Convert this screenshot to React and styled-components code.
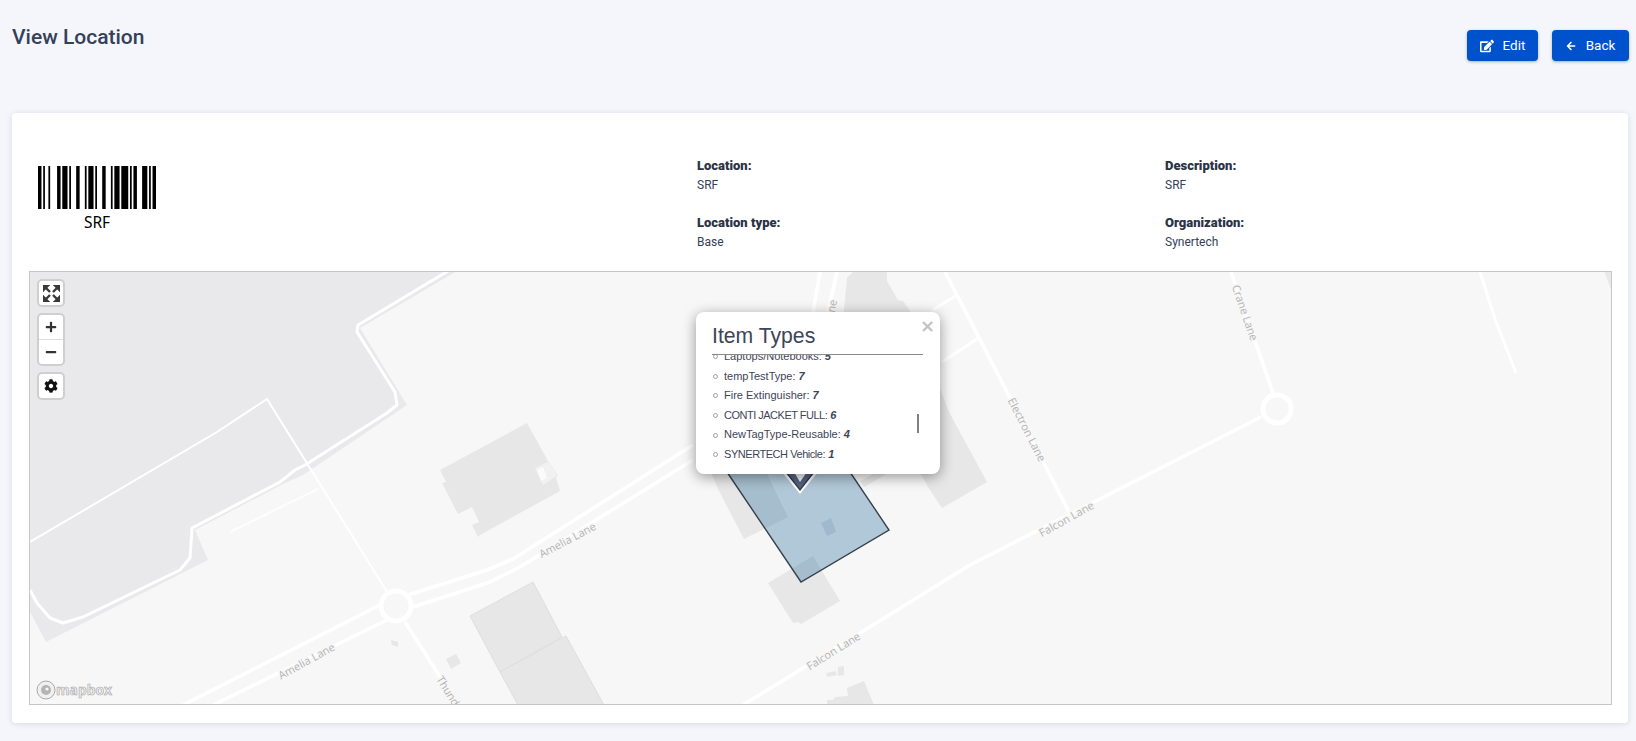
import React from "react";
import styled, { createGlobalStyle } from "styled-components";
import { FaEdit, FaArrowLeft, FaPlus, FaMinus, FaCog } from "react-icons/fa";

const Global = createGlobalStyle`
  html, body { margin: 0; padding: 0; height: 100%; background: #f4f6fb; overflow: hidden; }
  body { font-family: Roboto, "Liberation Sans", sans-serif; }
`;

const Page = styled.div`
  width: 1636px;
  height: 741px;
  background: #f4f6fb;
`;
const Header = styled.header`
  height: 113px;
  box-sizing: border-box;
  padding: 24px 7px 0 12px;
  display: flex;
  justify-content: space-between;
  align-items: flex-start;
`;
const Title = styled.h1`
  margin: 1px 0 0;
  font: 500 21px/24px Roboto, sans-serif;
  color: #344159;
`;
const Actions = styled.div`
  display: flex;
  gap: 14px;
  margin-top: 6px;
`;
const Button = styled.button`
  height: 31px;
  width: ${(p) => p.$w}px;
  border: 0;
  border-radius: 4px;
  background: #0052cc;
  color: #fff;
  font: 400 13.5px/31px Roboto, sans-serif;
  display: flex;
  align-items: center;
  justify-content: center;
  gap: ${(p) => p.$gap}px;
  padding: 0;
  box-shadow: 0 1px 3px rgba(0, 0, 0, 0.3);
`;
const Card = styled.section`
  width: 1616px;
  height: 610px;
  box-sizing: border-box;
  margin-left: 12px;
  padding: 44px 16px 0 17px;
  background: #fff;
  border-radius: 4px;
  box-shadow: 0 1px 6px rgba(40, 50, 80, 0.14);
`;
const Info = styled.div`
  display: grid;
  grid-template-columns: 668px 468px 1fr;
  height: 114px;
`;
const BarcodeBox = styled.div`
  margin: 9px 0 0 9px;
  width: 118px;
  display: flex;
  flex-direction: column;
  align-items: center;
`;
const BarcodeText = styled.div`
  font: 15.5px/18px "Noto Sans", sans-serif;
  color: #000;
  margin-top: 4px;
`;
const Column = styled.div`
  display: flex;
  flex-direction: column;
  gap: 19px;
`;
const Field = styled.div`
  display: flex;
  flex-direction: column;
`;
const Label = styled.div`
  font: 900 13px/19px Roboto, sans-serif;
  color: #2b3346;
  margin: -1px 0 1px;
`;
const Value = styled.div`
  font: 400 12px/19px Roboto, sans-serif;
  color: #344159;
`;
const MapBox = styled.div`
  position: relative;
  height: 434px;
  box-sizing: border-box;
  border: 1px solid #c6c6c6;
  overflow: hidden;
  background: #f7f7f7;
`;
const MapSvg = styled.svg`
  display: block;
  width: 100%;
  height: 100%;
`;
const Land = styled.polygon`
  fill: ${(p) => p.$fill || "#e7e7e7"};
  stroke: ${(p) => p.$stroke || "none"};
`;
const Road = styled.polyline`
  fill: none;
  stroke: #fff;
  stroke-width: ${(p) => p.$w || 3.6};
  stroke-linejoin: round;
  stroke-linecap: butt;
  opacity: ${(p) => p.$o || 1};
`;
const Roundabout = styled.circle`
  fill: #f7f7f7;
  stroke: #fff;
  stroke-width: 5;
`;
const Street = styled.text`
  font: 400 11px "Open Sans", "DejaVu Sans", sans-serif;
  fill: #b3b3b3;
  text-anchor: middle;
  dominant-baseline: middle;
  stroke: #f7f7f7;
  stroke-width: 3px;
  paint-order: stroke;
`;
const Parcel = styled.polygon`
  fill: #105d92;
  fill-opacity: 0.3;
  stroke: #36404c;
  stroke-width: 1.4;
`;
const LogoText = styled.text`
  font: 700 15px "Open Sans", "Liberation Sans", sans-serif;
  fill: #f0f0f0;
  stroke: #a8a8a8;
  stroke-width: 0.7px;
`;
const Controls = styled.div`
  position: absolute;
  left: 7px;
  top: 7px;
  display: flex;
  flex-direction: column;
  gap: 6px;
`;
const CtrlGroup = styled.div`
  width: 24px;
  background: #fff;
  border: 2px solid #cfcfcf;
  border-radius: 5px;
  display: flex;
  flex-direction: column;
`;
const CtrlBtn = styled.div`
  height: 24px;
  display: flex;
  align-items: center;
  justify-content: center;
  color: #333;
  & + & {
    border-top: 1px solid #ddd;
  }
`;
const Popup = styled.div`
  position: absolute;
  left: 666px;
  top: 40px;
  width: 244px;
  height: 162px;
  box-sizing: border-box;
  padding: 11px 17px 0 16px;
  background: #fff;
  border-radius: 8px;
  box-shadow: 0 3px 14px rgba(0, 0, 0, 0.4);
`;
const PopupClose = styled.span`
  position: absolute;
  right: 5px;
  top: 4px;
  font: 700 18px/20px "DejaVu Sans", sans-serif;
  color: #c3c3c3;
`;
const PopupTitle = styled.h3`
  margin: 0;
  padding-bottom: 5px;
  border-bottom: 1px solid #8a8a8a;
  font: 400 21.2px/26px "Liberation Sans", Arial, sans-serif;
  color: #3d4558;
  width: 211px;
`;
const ListClip = styled.div`
  height: 118px;
  overflow: hidden;
`;
const List = styled.ul`
  list-style: none;
  margin: -8px 0 0;
  padding: 0;
`;
const Item = styled.li`
  height: 19.6px;
  display: flex;
  align-items: center;
  gap: 6px;
  font: 400 11px/19.6px "Liberation Sans", Arial, sans-serif;
  letter-spacing: ${(p) => p.$track || 0}px;
  color: #3d4558;
  &::before {
    content: "";
    width: 3px;
    height: 3px;
    border: 1px solid #a0a0a0;
    border-radius: 50%;
    margin-left: 1px;
  }
`;
const Count = styled.b`
  font-style: italic;
  margin-left: 3px;
`;
const Thumb = styled.div`
  position: absolute;
  left: 221px;
  top: 102px;
  width: 2px;
  height: 19px;
  background: #808080;
`;

const patterns = ["11010010000", "11011101000", "11000101110", "10001100010", "11101111010", "1100011101011"];
const bits = patterns.join("");

function Barcode() {
  const rects = [];
  let i = 0;
  while (i < bits.length) {
    if (bits[i] === "1") {
      let j = i;
      while (bits[j] === "1") j++;
      rects.push(<rect key={i} x={i} y="0" width={j - i} height="43" fill="#000" />);
      i = j;
    } else i++;
  }
  return (
    <svg width="118" height="43" viewBox={`0 0 ${bits.length} 43`} preserveAspectRatio="none">
      {rects}
    </svg>
  );
}

function ExpandIcon() {
  return (
    <svg width="17" height="17" viewBox="0 0 17 17" fill="#3a3a3a" stroke="#3a3a3a">
      <polygon points="0,0 7,0 0,7" strokeWidth="0.4" />
      <polygon points="17,0 10,0 17,7" strokeWidth="0.4" />
      <polygon points="0,17 7,17 0,10" strokeWidth="0.4" />
      <polygon points="17,17 10,17 17,10" strokeWidth="0.4" />
      <path d="M3 3 L7 7 M14 3 L10 7 M3 14 L7 10 M14 14 L10 10" strokeWidth="2.4" fill="none" />
    </svg>
  );
}

function MapDrawing() {
  return (
    <MapSvg viewBox="30 272 1581 432" preserveAspectRatio="none">
      <Land $fill="#e9e9eb" points="29,271 457,271 360,328 407,405 303,475 283,484 195,530 208,560 46,642 29,610" />
      <Land $fill="#e9e9eb" points="1604,271 1612,271 1612,292" />

      <Land points="527,423 548,461 558,475 556,478 560,491 480,535 478,537 472,525 479,522 472,507 458,514 442,483 446,482 440,470" />
      <Land $fill="#f1f1f1" points="535,468 548,462 558,475 543,485" />
      <Land $fill="#fbfbfb" points="537,470 543,467 547,478 541,481" />
      <Land points="470,616 533,582 562,637 500,672" $stroke="#dedede" />
      <Land points="566,636 604,705 518,705 500,672" $stroke="#dedede" />
      <Land points="768,583 813,556 840,601 801,624 798,622 793,623" />
      <Land points="718,489 744,539 788,517 760,460 710,470" />
      <Land points="847,278 853,272 887,272 887,281 898,300 903,301 910,311 949,412 987,482 942,508 928,487 842,330" />
      <Land points="860,481 881,470 885,475 864,487" />
      <Land points="827,705 827,700 833,700 835,697 848,696 847,688 864,681 874,705" />
      <Land points="826,673 836,671 837,675 827,677" />
      <Land points="838,667 844,666 844,675 838,676" />
      <Land points="446,659 456,654 461,663 451,669" />
      <Land points="391,640 398,642 398,647 392,645" />

      <Road $w={3} points="448,271 358,325 357,332 395,392 397,405 387,413 305,465 295,470 280,482 192,528 190,558 180,570 83,617 63,623 50,618 37,603 30,590" />
      <Road $w={2} points="30,542 217,432 267,399 389,595" />
      <Road $w={2} $o={0.8} points="230,532 318,489" />
      <Road points="408,595 487,570 513,559 693,445" />
      <Road points="413,607 490,582 520,567 693,460" />
      <Road points="380,605 183,705" />
      <Road points="387,620 213,705" />
      <Road points="405,622 458,705" />
      <Road points="820,272 813,312" />
      <Road points="837,272 828,312" />
      <Road points="945,272 1069,512" />
      <Road $w={3} points="957,295 933,310" />
      <Road $w={3} points="980,337 942,362" />
      <Road points="1261,417 970,565 860,633 743,705" />
      <Road points="1231,272 1273,393" />
      <Road $w={3} points="1480,272 1496,322 1516,373" />
      <Roundabout cx="396" cy="606" r="15" />
      <Roundabout cx="1277" cy="409" r="14" />

      <Parcel points="729,475 801,582 889,530 817,423 700,432" />
      <Land $fill="#a0bacb" points="821,523 831,518 836,532 827,536" />

      <polygon points="782,472 800,494 818,472" fill="#fff" />
      <polygon points="785,472 800,491 815,472" fill="#2f3850" />
      <polygon points="787,472 800,489 813,472" fill="#566080" />
      <polygon points="794,472 800,482 807,472" fill="#f2f2f2" />

      <Street x="568" y="541" transform="rotate(-28 568 541)">Amelia Lane</Street>
      <Street x="307" y="662" transform="rotate(-29 307 662)">Amelia Lane</Street>
      <Street x="450" y="696" transform="rotate(58 450 696)">Thunder</Street>
      <Street x="1026" y="430" transform="rotate(63 1026 430)">Electron Lane</Street>
      <Street x="1067" y="520" transform="rotate(-29 1067 520)">Falcon Lane</Street>
      <Street x="834" y="652" transform="rotate(-32 834 652)">Falcon Lane</Street>
      <Street x="1244" y="313" transform="rotate(71 1244 313)">Crane Lane</Street>
      <Street x="832" y="312" transform="rotate(-80 832 312)">Lane</Street>

      <circle cx="46" cy="690" r="9" fill="#f0f0f0" stroke="#a8a8a8" strokeWidth="1" />
      <circle cx="46" cy="690" r="5" fill="#b4b4b4" />
      <circle cx="47" cy="689" r="1.6" fill="#f7f7f7" />
      <LogoText x="56" y="695" textLength="56" lengthAdjust="spacingAndGlyphs">mapbox</LogoText>
    </MapSvg>
  );
}

const items = [
  ["Laptops/Notebooks:", 5],
  ["tempTestType:", 7],
  ["Fire Extinguisher:", 7],
  ["CONTI JACKET FULL:", 6, -0.5],
  ["NewTagType-Reusable:", 4],
  ["SYNERTECH Vehicle:", 1, -0.45],
];

export default function App() {
  return (
    <Page>
      <Global />
      <Header>
        <Title>View Location</Title>
        <Actions>
          <Button $w={71} $gap={9}>
            <FaEdit size={14} />
            Edit
          </Button>
          <Button $w={77} $gap={10}>
            <FaArrowLeft size={10} />
            Back
          </Button>
        </Actions>
      </Header>
      <Card>
        <Info>
          <BarcodeBox>
            <Barcode />
            <BarcodeText>SRF</BarcodeText>
          </BarcodeBox>
          <Column>
            <Field>
              <Label>Location:</Label>
              <Value>SRF</Value>
            </Field>
            <Field>
              <Label>Location type:</Label>
              <Value>Base</Value>
            </Field>
          </Column>
          <Column>
            <Field>
              <Label>Description:</Label>
              <Value>SRF</Value>
            </Field>
            <Field>
              <Label>Organization:</Label>
              <Value>Synertech</Value>
            </Field>
          </Column>
        </Info>
        <MapBox>
          <MapDrawing />
          <Controls>
            <CtrlGroup>
              <CtrlBtn>
                <ExpandIcon />
              </CtrlBtn>
            </CtrlGroup>
            <CtrlGroup>
              <CtrlBtn>
                <FaPlus size={12} />
              </CtrlBtn>
              <CtrlBtn>
                <FaMinus size={12} />
              </CtrlBtn>
            </CtrlGroup>
            <CtrlGroup>
              <CtrlBtn>
                <FaCog size={14} color="#111" />
              </CtrlBtn>
            </CtrlGroup>
          </Controls>
          <Popup>
            <PopupClose>×</PopupClose>
            <PopupTitle>Item Types</PopupTitle>
            <ListClip>
              <List>
                {items.map(([name, n, track]) => (
                  <Item key={name} $track={track}>
                    <span>
                      {name}
                      <Count>{n}</Count>
                    </span>
                  </Item>
                ))}
              </List>
            </ListClip>
            <Thumb />
          </Popup>
        </MapBox>
      </Card>
    </Page>
  );
}
